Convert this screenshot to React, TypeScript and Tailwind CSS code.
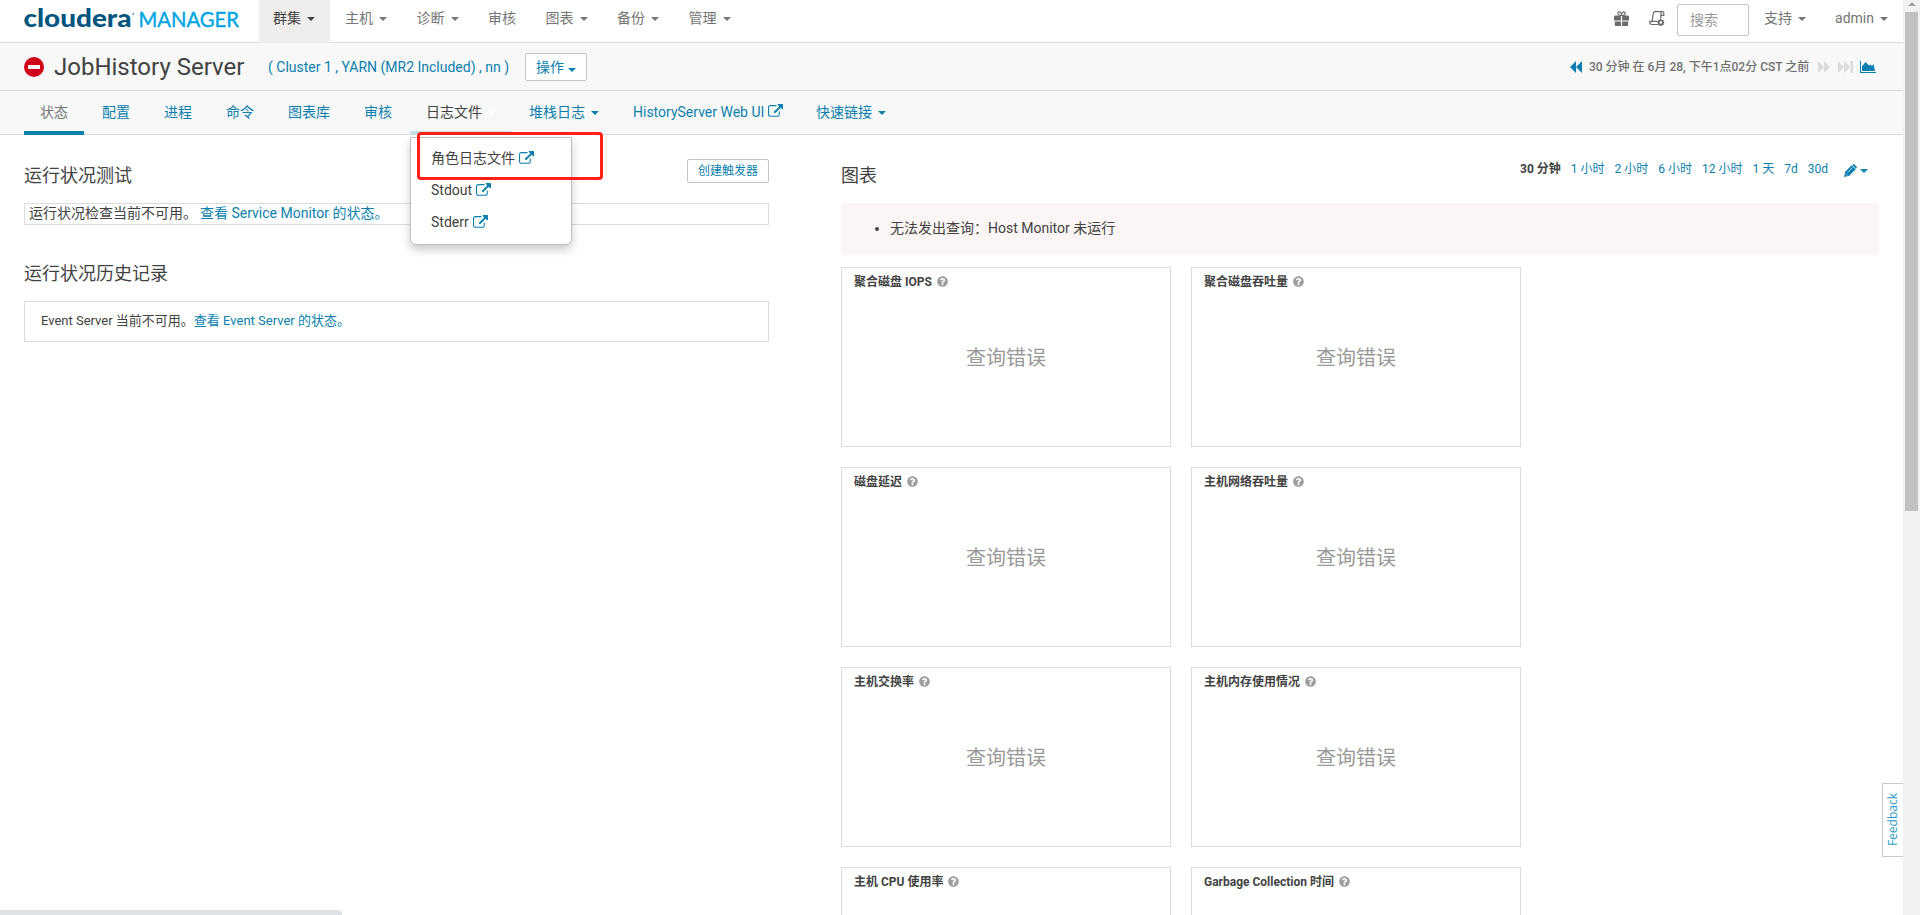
import type { ReactNode } from "react";
import clsx from "clsx";
import { FaQuestionCircle } from "react-icons/fa";

const navItems = [
  { label: "群集", caret: true, active: true },
  { label: "主机", caret: true },
  { label: "诊断", caret: true },
  { label: "审核", caret: false },
  { label: "图表", caret: true },
  { label: "备份", caret: true },
  { label: "管理", caret: true },
];

const plainTabs = ["配置", "进程", "命令", "图表库", "审核"];

const logFiles = ["角色日志文件", "Stdout", "Stderr"];

const ranges = ["1 小时", "2 小时", "6 小时", "12 小时", "1 天", "7d", "30d"];

const charts = [
  { title: "聚合磁盘 IOPS", error: "查询错误" },
  { title: "聚合磁盘吞吐量", error: "查询错误" },
  { title: "磁盘延迟", error: "查询错误" },
  { title: "主机网络吞吐量", error: "查询错误" },
  { title: "主机交换率", error: "查询错误" },
  { title: "主机内存使用情况", error: "查询错误" },
  { title: "主机 CPU 使用率" },
  { title: "Garbage Collection 时间" },
];

function Caret({ className }: { className?: string }) {
  return (
    <span
      className={clsx(
        "inline-block h-0 w-0 border-x-4 border-t-4 border-x-transparent border-t-current",
        className
      )}
    />
  );
}

function ExternalLink() {
  return (
    <svg viewBox="0 0 1792 1792" className="h-[15px] w-[15px] shrink-0 fill-[#0b7fad]">
      <path d="M1408 928v320q0 119-84.5 203.5t-203.5 84.5h-832q-119 0-203.5-84.5t-84.5-203.5v-832q0-119 84.5-203.5t203.5-84.5h704q14 0 23 9t9 23v64q0 14-9 23t-23 9h-704q-66 0-113 47t-47 113v832q0 66 47 113t113 47h832q66 0 113-47t47-113v-320q0-14 9-23t23-9h64q14 0 23 9t9 23zm384-864v512q0 26-19 45t-45 19-45-19l-176-176-652 652q-10 10-23 10t-23-10l-114-114q-10-10-10-23t10-23l652-652-176-176q-19-19-19-45t19-45 45-19h512q26 0 45 19t19 45z" />
    </svg>
  );
}

function Logo() {
  return (
    <svg width="220" height="42" className="ml-6 shrink-0">
      <text x="-0.5" y="27" fontFamily="Lato" fontWeight="900" fontSize="25" textLength="108" lengthAdjust="spacingAndGlyphs" fill="#00567f">
        cloudera
      </text>
      <circle cx="109.3" cy="14" r="1" fill="#5f93ad" />
      <text x="114.5" y="27" fontFamily="Lato" fontWeight="400" fontSize="21.5" textLength="100.5" lengthAdjust="spacingAndGlyphs" fill="#00a5e3" stroke="#00a5e3" strokeWidth="0.4">
        MANAGER
      </text>
    </svg>
  );
}

function GiftIcon() {
  return (
    <svg width="15" height="16" viewBox="0 0 15 16" fill="#6b6b6b">
      <path d="M1 4.500h5.900v5H0v-4zM8.100 4.500H14l1 1v4H8.100zM.8 10.500h6.100V15H1.500l-.7-.7zM8.100 10.500h6.100v3.800l-.7.7H8.100z" />
      <path d="M7.500 4.500C6 4.500 3.800 4 3.800 2.200c0-1.700 2.900-2 3.700.8.800-2.800 3.700-2.500 3.700-.8 0 1.800-2.200 2.300-3.700 2.300z" fill="none" stroke="#6b6b6b" strokeWidth="1.100" />
    </svg>
  );
}

function ScrollIcon() {
  return (
    <svg width="16" height="16" viewBox="0 0 16 16" fill="none" stroke="#6b6b6b" strokeWidth="1.2">
      <path d="M3.200 10 4.200 3C4.400 1.500 5 .6 6.200.6h7.500c-1.200 0-1.600 1-1.700 2l-.5 5" />
      <path d="M12 4.300h2.800V2c0-.9-.4-1.400-1.100-1.400" />
      <path d="M8.500 10.400H.7c0 2.300.8 3.100 2.400 3.100h6.300" />
      <circle cx="11.800" cy="11.500" r="2.200" strokeWidth="1.800" />
      <path d="M11.800 8v1.300M11.800 13.700V15M8.300 11.500h1.300M14 11.500h1.300M9.400 9.100l.9.900M13.300 13l.9.900M14.200 9.100l-.9.900M9.400 13.900l.9-.9" />
    </svg>
  );
}

function TopNav() {
  return (
    <header className="flex h-[43px] border-b border-[#dcdcdc] bg-white text-[#757575]">
      <Logo />
      <nav className="ml-[15px] flex h-[43px]">
        {navItems.map((item) => (
          <a
            key={item.label}
            className={clsx(
              "flex h-[43px] pt-[8px] leading-5",
              item.active ? "w-[71px] bg-[#f0eded] pl-[14px] text-[#424242]" : "pl-[15px]",
              !item.active && (item.caret ? "w-[71.5px]" : "w-[57.5px]")
            )}
          >
            {item.label}
            {item.caret && <Caret className="mt-[9px] ml-[6px]" />}
          </a>
        ))}
      </nav>
      <div className="ml-auto flex">
        <span className="mt-[11px]"><GiftIcon /></span>
        <span className="mt-[11px] ml-[20px]"><ScrollIcon /></span>
        <div className="mt-1 ml-3 h-8 w-[72px] rounded-[2px] border border-[#c4c4c4] pt-[5px] pl-3 leading-5 text-[#999]">
          搜索
        </div>
        <a className="mt-[8px] ml-[15px] flex leading-5">
          支持 <Caret className="mt-[9px] ml-[6px]" />
        </a>
        <a className="mt-[8px] mr-[15px] ml-[29px] flex leading-5">
          admin <Caret className="mt-[9px] ml-[6px]" />
        </a>
      </div>
    </header>
  );
}

function TitleBar() {
  return (
    <div className="flex h-12 items-center border-b border-[#dcdcdc] bg-[#f8f8f8] pl-6">
      <svg width="20" height="20" viewBox="0 0 20 20">
        <circle cx="10" cy="10" r="10" fill="#d0021b" />
        <rect x="4" y="8" width="12" height="4" rx="0.5" fill="#f8f4f4" />
      </svg>
      <h1 className="ml-[10px] w-[214px] text-[24px] leading-7 whitespace-nowrap text-[#424242]">JobHistory Server</h1>
      <span className="w-[257px] whitespace-nowrap text-[#0b7fad]">( Cluster 1 , YARN (MR2 Included) , nn )</span>
      <button className="flex h-7 w-[62px] rounded-[2px] border border-[#c4c4c4] bg-white pt-[3px] pl-[10px] leading-5 text-[#0b7fad]">
        操作
        <Caret className="mt-[11px] ml-[4px]" />
      </button>
      <div className="mr-[27px] ml-auto flex items-center text-[12px] font-medium text-[#6f6f6f]">
        <svg width="12" height="12" viewBox="0 0 12 12" fill="#0b7fad">
          <path d="M6 0v12L0 6zM12 0v12L6 6z" />
        </svg>
        <span className="mr-[7px] ml-[7px] w-[222px] whitespace-nowrap">30 分钟 在 6月 28, 下午1点02分 CST 之前</span>
        <svg width="12" height="12" viewBox="0 0 12 12" fill="#dcdcdc">
          <path d="M0 0v12l6-6zM6 0v12l6-6z" />
        </svg>
        <svg width="15" height="12" viewBox="0 0 15 12" fill="#dcdcdc" className="ml-2">
          <path d="M0 0v12l6-6zM6 0v12l6-6zM12.500 0h2.500v12h-2.500z" />
        </svg>
        <svg width="16" height="12" viewBox="0 0 16 12" fill="#0b7fad" className="ml-[7px]">
          <path d="M0 0h1v11h15v1H0z" />
          <path d="M2 10V5.500L5.500 1 9 4.500l1.500-1L12 5l1.500-2L15 10z" />
        </svg>
      </div>
    </div>
  );
}

function Tab({ className, children }: { className?: string; children: ReactNode }) {
  return (
    <a className={clsx("flex h-11 border-b-4 px-4 pt-[11px] leading-5 whitespace-nowrap", className)}>
      {children}
    </a>
  );
}

function LogMenu() {
  return (
    <div className="absolute top-[46px] left-0 z-10 h-[108px] w-[162px] rounded-b-[6px] border border-[#bdbdbd] bg-white pt-1 text-[#424242] shadow-[0_5px_10px_rgba(0,0,0,0.2)]">
      {logFiles.map((name) => (
        <div key={name} className="flex h-8 items-center gap-1 pl-5 leading-5">
          {name}
          <ExternalLink />
        </div>
      ))}
      {/* highlight frame around the first entry */}
      <div className="absolute top-[-6px] left-[6px] h-[48px] w-[186px] rounded-[4px] border-[3px] border-[#ff2015]" />
    </div>
  );
}

function Tabs() {
  return (
    <div className="flex h-11 gap-[2px] border-b border-[#dcdcdc] bg-[#f8f8f8] pl-6 text-[#0b7fad]">
      <Tab className="border-[#0b7fad] text-[#757575]">状态</Tab>
      {plainTabs.map((tab) => (
        <Tab key={tab} className="border-transparent">{tab}</Tab>
      ))}
      <div className="relative">
        <Tab className="w-[101px] border-[#c5dfe9] text-[#424242]">
          日志文件
          <Caret className="mt-[9px] ml-[5px] text-white" />
        </Tab>
        <LogMenu />
      </div>
      <Tab className="w-[102px] border-transparent">
        堆栈日志
        <Caret className="mt-[9px] ml-[6px]" />
      </Tab>
      <Tab className="w-[181px] border-transparent">
        HistoryServer Web UI
        <span className="mt-[2px] ml-1"><ExternalLink /></span>
      </Tab>
      <Tab className="border-transparent">
        快速链接
        <Caret className="mt-[9px] ml-[6px]" />
      </Tab>
    </div>
  );
}

function HealthColumn() {
  return (
    <section className="w-[745px]">
      <div className="flex h-[68px] justify-between">
        <h2 className="mt-[27px] text-[18px] leading-[27px]">运行状况测试</h2>
        <button className="mt-6 h-6 w-[82px] rounded-[2px] border border-[#c4c4c4] text-[12px] leading-[22px] text-[#0b7fad]">
          创建触发器
        </button>
      </div>
      <div className="flex h-[22px] gap-[10px] border border-[#dcdcdc] pl-1 leading-[18px]">
        <span>运行状况检查当前不可用。</span>
        <a className="-ml-[7px] text-[#0b7fad]">查看 Service Monitor 的状态。</a>
      </div>
      <h2 className="mt-[36px] mb-[14px] text-[18px] leading-[26px]">运行状况历史记录</h2>
      <div className="h-[41px] border border-[#dcdcdc] pl-4 text-[13px] leading-[38px]">
        Event Server 当前不可用。<a className="text-[#0b7fad]">查看 Event Server 的状态。</a>
      </div>
    </section>
  );
}

function ChartCard({ title, error }: { title: string; error?: string }) {
  return (
    <div className="h-[180px] border border-[#dcdcdc] px-3 pt-[6px]">
      <div className="flex h-4 items-center gap-[5px] text-[12px] leading-4 font-bold">
        {title}
        <FaQuestionCircle className="-mt-px h-[11px] w-[11px] text-[#9e9e9e]" />
      </div>
      {error && <div className="mt-[54px] text-center text-[20px] leading-7 text-[#999]">{error}</div>}
    </div>
  );
}

function ChartsColumn() {
  return (
    <section className="ml-[72px] w-[1038px]">
      <div className="flex h-[68px]">
        <h2 className="mt-[27px] text-[18px] leading-[27px]">图表</h2>
        <div className="mt-6 mr-[11px] ml-auto flex h-5 gap-[10px] text-[12px] leading-5 text-[#0b7fad]">
          <b className="text-[#424242]">30 分钟</b>
          {ranges.map((range) => (
            <a key={range}>{range}</a>
          ))}
          <span className="ml-[6px] flex">
            <svg width="13" height="13" viewBox="0 0 13 13" fill="#0b7fad" className="mt-[5px]">
              <path d="M1.200 7.800 7.700 1.300l4 4-6.500 6.500L0 13zM8.700.6c.6-.6 1.200-.6 1.800 0l1.900 1.900c.6.600.6 1.200 0 1.800l-.4.400L8.300 1z" />
              <path d="M3.500 8.500 8.500 3.500M1.500 9.800l1.700 1.700" stroke="#fff" strokeWidth="0.7" />
            </svg>
            <Caret className="mt-[10px] ml-[3px]" />
          </span>
        </div>
      </div>
      <ul className="h-[52px] list-disc bg-[#fbf5f5] pt-[15px] pl-[49px] leading-5">
        <li>无法发出查询：Host Monitor 未运行</li>
      </ul>
      <div className="mt-3 grid grid-cols-[330px_330px] gap-5">
        {charts.map((chart) => (
          <ChartCard key={chart.title} title={chart.title} error={chart.error} />
        ))}
      </div>
    </section>
  );
}

export default function App() {
  return (
    <div className="relative flex h-[915px] w-[1920px] overflow-hidden bg-white font-[Roboto,'Noto_Sans_CJK_SC',sans-serif] text-[14px] leading-5 text-[#424242]">
      <div className="h-[915px] w-[1903px]">
        <TopNav />
        <TitleBar />
        <Tabs />
        <main className="flex h-[780px] overflow-hidden pl-6">
          <HealthColumn />
          <ChartsColumn />
        </main>
      </div>
      {/* page scrollbar */}
      <div className="flex w-[17px] flex-col items-center bg-[#f1f1f1] pt-[2px]">
        <Caret className="rotate-180 text-[#a3a3a3]" />
        <div className="mt-[6px] h-[499px] w-[13px] bg-[#c1c1c1]" />
      </div>
      <a className="absolute top-[783px] right-[17px] flex h-[74px] w-[21px] items-center justify-center border border-r-0 border-[#c8c8c8] bg-white text-[#2f9bc6]">
        <span className="rotate-180 font-['Open_Sans',sans-serif] text-[12px] [writing-mode:vertical-rl]">Feedback</span>
      </a>
      <div className="absolute bottom-0 left-0 h-[5px] w-[342px] rounded-tr-[4px] bg-[#dee1e6]" />
    </div>
  );
}
